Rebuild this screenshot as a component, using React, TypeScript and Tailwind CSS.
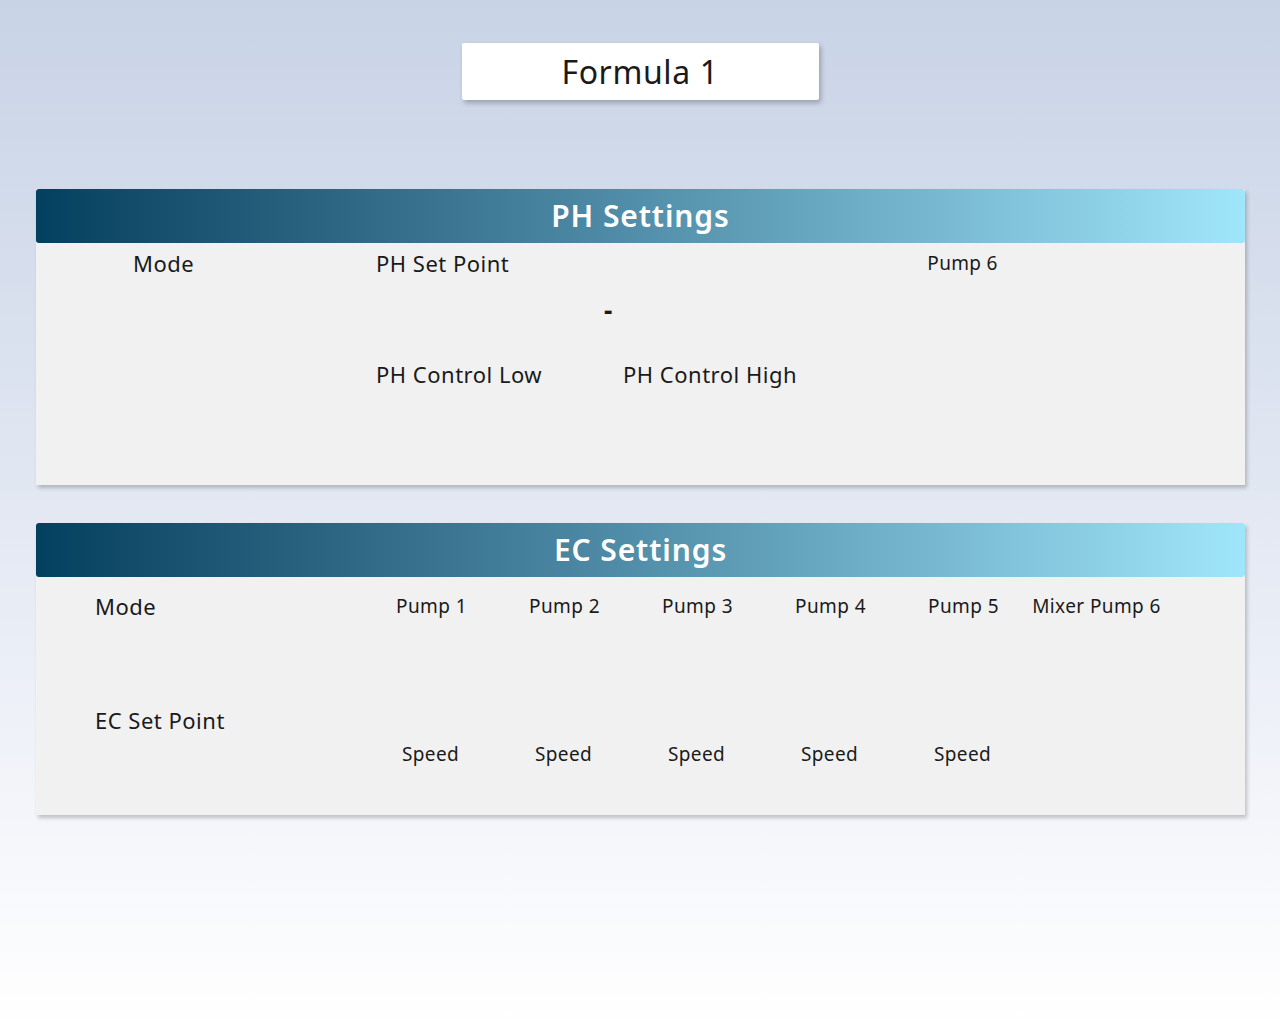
import React from 'react'

const font = { fontFamily: '"Noto Sans", "Open Sans", sans-serif' }

const pumps = ['Pump 1', 'Pump 2', 'Pump 3', 'Pump 4', 'Pump 5', 'Mixer Pump 6']

function Header({ title }: { title: string }) {
  return (
    <div className="h-[54px] rounded-[3px] bg-gradient-to-r from-[#03405f] to-[#a0e6fa] flex items-center justify-center">
      <span className="text-white text-[30px] font-semibold leading-none tracking-[0.9px]">{title}</span>
    </div>
  )
}

export default function App() {
  return (
    <div
      className="min-h-[1024px] w-full bg-gradient-to-b from-[#c8d3e6] via-[#eef1f8] via-70% to-white text-[#1a1a1a]"
      style={font}
    >
      <div className="flex justify-center pt-[43px]">
        <div className="w-[357px] h-[57px] bg-white rounded-[2px] shadow-[2px_3px_5px_rgba(0,0,0,0.25)] flex items-center justify-center">
          <span className="text-[32px] leading-none tracking-[0.6px]">Formula 1</span>
        </div>
      </div>

      {/* PH Settings */}
      <div className="ml-[36px] w-[1209px] mt-[89px] bg-[#f1f1f1] shadow-[2px_3px_4px_rgba(0,0,0,0.22)]">
        <Header title="PH Settings" />
        <div className="flex h-[242px] tracking-[0.5px]">
          <div className="w-[329px] pl-[97px] pt-[5px]">
            <div className="text-[22px] leading-[30px]">Mode</div>
          </div>
          <div className="w-[531px] pl-[11px] pt-[5px]">
            <div className="text-[22px] leading-[30px]">PH Set Point</div>
            <div className="pl-[228px] mt-[17px] text-[26px] font-bold leading-[30px]">-</div>
            <div className="flex mt-[34px] text-[22px] leading-[30px]">
              <span className="w-[247px]">PH Control Low</span>
              <span>PH Control High</span>
            </div>
          </div>
          <div className="w-[133px] pt-[7px] text-center">
            <div className="text-[19px] leading-[26px] tracking-[0.3px]">Pump 6</div>
          </div>
        </div>
      </div>

      {/* EC Settings */}
      <div className="ml-[36px] w-[1209px] mt-[38px] bg-[#f1f1f1] shadow-[2px_3px_4px_rgba(0,0,0,0.22)]">
        <Header title="EC Settings" />
        <div className="flex h-[238px]">
          <div className="w-[329px] pl-[59px] pt-[14px] tracking-[0.5px]">
            <div className="text-[22px] leading-[30px]">Mode</div>
            <div className="mt-[84px] text-[22px] leading-[30px]">EC Set Point</div>
          </div>
          <div className="grid grid-cols-[repeat(6,133px)] pt-[16px] content-start tracking-[0.4px]">
            {pumps.map((p) => (
              <div key={p} className="text-center text-[19px] leading-[26px]">{p}</div>
            ))}
            {pumps.slice(0, 5).map((p) => (
              <div key={p + 's'} className="text-center text-[19px] leading-[26px] mt-[122px] pr-[2px]">Speed</div>
            ))}
          </div>
        </div>
      </div>
    </div>
  )
}
